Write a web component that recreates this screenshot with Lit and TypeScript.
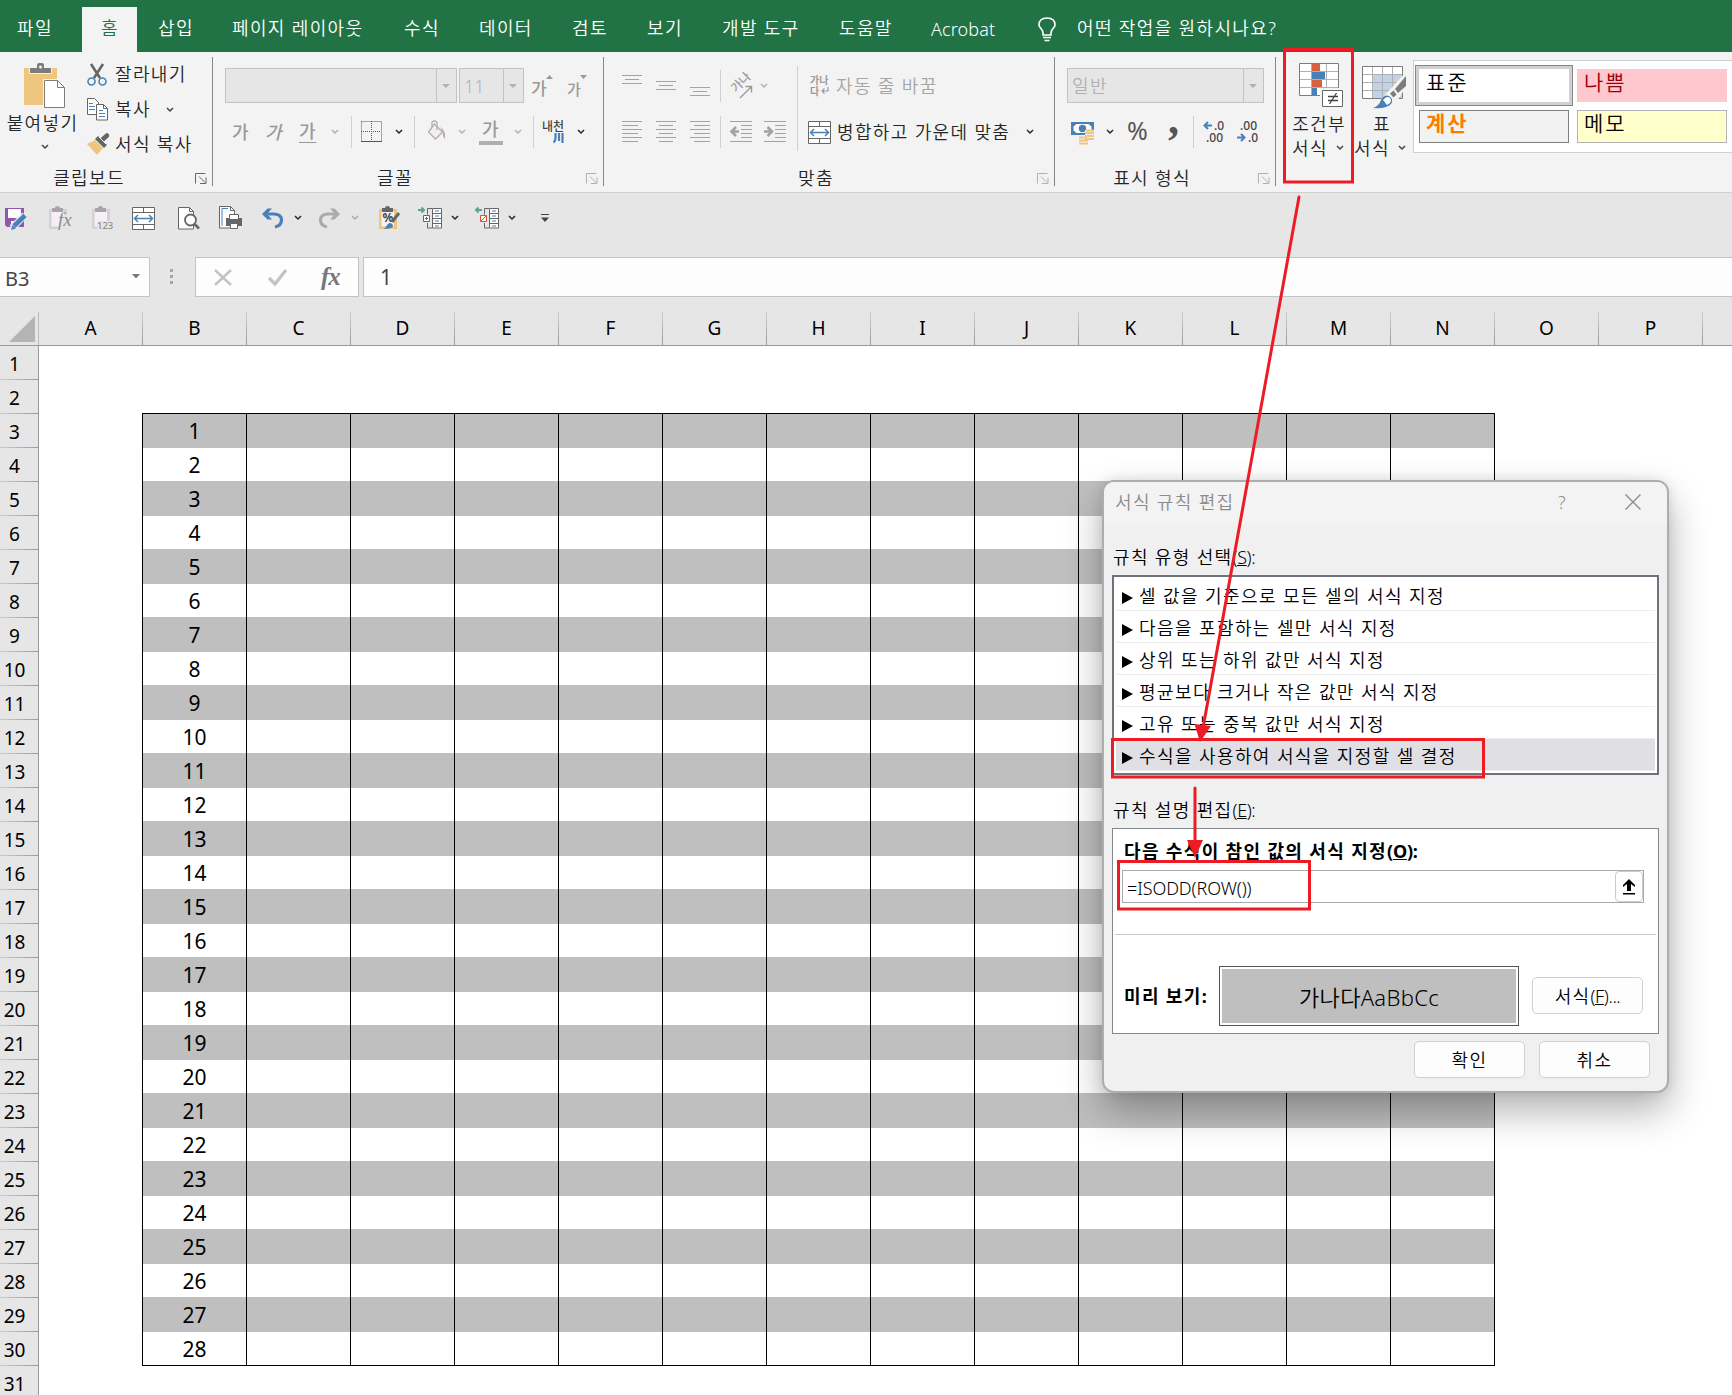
import { LitElement, html, svg, css } from 'lit';
import { customElement } from 'lit/decorators.js';
import { classMap } from 'lit/directives/class-map.js';

const base = css`
  * {
    box-sizing: border-box;
  }
  :host {
    display: block;
    box-sizing: border-box;
    font-family: 'Noto Sans', 'Noto Sans CJK KR', sans-serif;
    font-size: 18px;
    font-weight: 350;
    letter-spacing: 1.35px;
    line-height: 24px;
    white-space: nowrap;
    color: #262626;
  }
  svg {
    display: block;
    flex: none;
    overflow: visible;
  }
`;

const icon = (w: number, h: number, body: unknown) => html`
  <svg width=${w} height=${h} viewBox="0 0 ${w} ${h}" fill="none">${body}</svg>
`;

const chevron = (color = '#262626') =>
  icon(8, 6, svg`<path d="M1 1l3 3l3-3" stroke=${color} stroke-width="1.5" />`);

const mergeIcon = icon(23, 23, svg`
  <path d="M.5 .5h22v22h-22zM.5 5.5h22M.5 17.5h22M11.5 .5v5M11.5 17.5v5" fill="#fff" stroke="#666" />
  <path d="M2.5 11.5h18M6 8l-3.5 3.5L6 15M17 8l3.5 3.5L17 15" stroke="#4a80b8" stroke-width="1.5" />
`);

const scissors = icon(20, 22, svg`
  <path d="M4 0l9 14M16 0L7 14" stroke="#666" stroke-width="2.6" />
  <circle cx="4.5" cy="17.5" r="3.5" stroke="#4a80b8" stroke-width="1.6" />
  <circle cx="15.5" cy="17.5" r="3.5" stroke="#4a80b8" stroke-width="1.6" />
`);

const copyIcon = icon(21, 23, svg`
  <path d="M.5 .5h7l4 4v12H.5z" fill="#fff" stroke="#666" />
  <path d="M2 5.5h4M2 8.5h6M2 11.5h6" stroke="#4a80b8" />
  <path d="M9.500 6.500h7l4 4v11.500h-11z" fill="#fff" stroke="#666" />
  <path d="M16.500 6.500v4h4" stroke="#666" />
  <path d="M12 12.500h4M12 15.500h6M12 18.500h6" stroke="#4a80b8" />
`);

const painter = icon(23, 21, svg`
  <path d="M0 10l8-4 8 8-6 7z" fill="#edc57f" />
  <path d="M8 5l3-3 9 9-3 3z" fill="#666" />
  <path d="M14 7l6-5.500" stroke="#666" stroke-width="4.500" stroke-linecap="round" />
  <path d="M12 3l7 7" stroke="#f3f3f3" />
`);

const pasteIcon = icon(42, 45, svg`
  <path d="M0 5h33v37H0z" fill="#eec67d" />
  <path d="M6 5h7V2q0-2 2-2h3q2 0 2 2v3h7v5H6z" fill="#7c7c7c" />
  <path d="M5.500 5v5.500h22V5" stroke="#f3f3f3" />
  <circle cx="16.500" cy="4" r="1.500" fill="#f3f3f3" />
  <path d="M19 16h16l7 7v22H19z" fill="#f3f3f3" />
  <path d="M20.500 17.500h13l7 7v20h-20z" fill="#fff" stroke="#7c7c7c" />
  <path d="M33.500 17.500v7h7" stroke="#7c7c7c" />
`);

const launcher = (color: string) =>
  icon(12, 11, svg`<path d="M.5 10.500v-10h10M4 3.500l6 6M11 4.500v6h-6" stroke=${color} />`);

// Ruled lines, each given as [x, y, width].
const lines = (rows: number[][], color = '#a3a3a3') =>
  rows.map(([x, y, w]) => svg`<path d="M${x} ${y + 0.5}h${w}" stroke=${color} />`);

const alignTop = icon(20, 22, lines([[0, 0, 20], [3, 4, 14], [0, 8, 20]]));
const alignMiddle = icon(20, 22, lines([[0, 6, 20], [3, 10, 14], [0, 14, 20]]));
const alignBottom = icon(20, 22, lines([[0, 12, 20], [3, 16, 14], [0, 20, 20]]));
const alignLeft = icon(20, 22, lines([[0, 0, 20], [0, 4, 16], [0, 8, 20], [0, 12, 16], [0, 16, 20], [0, 20, 16]]));
const alignCenter = icon(20, 22, lines([[0, 0, 20], [3, 4, 14], [0, 8, 20], [3, 12, 14], [0, 16, 20], [3, 20, 14]]));
const alignRight = icon(20, 22, lines([[0, 0, 20], [4, 4, 16], [0, 8, 20], [4, 12, 16], [0, 16, 20], [4, 20, 16]]));

const indent = (out: boolean) => icon(22, 22, svg`
  ${lines([[0, 0, 22], [11, 4, 11], [11, 8, 11], [11, 12, 11], [11, 16, 11], [0, 20, 22]])}
  <path d=${out ? 'M9 10.500H2M6 6l-4.500 4.500L6 15' : 'M0 10.500h7M3.500 6l4.500 4.500L3.500 15'}
    stroke="#a3a3a3" stroke-width="2.600" />
`);

const borderIcon = icon(21, 22, svg`
  <path d="M.5 .5h20v20M.5 .5v20M10.500 0v20M0 10.500h20" stroke="#555" stroke-dasharray="1 1" />
  <path d="M0 20.500h21" stroke="#555" />
`);

const bucket = icon(20, 22, svg`
  <path d="M7.500 3l8 8-7 7-7-7z" fill="#f3edf3" stroke="#b0b0b0" stroke-width="1.300" />
  <path d="M5 6V2q0-2 2.500-2T10 2v7" stroke="#b0b0b0" stroke-width="1.300" />
  <path d="M13 6q6 3 5 12q-3-3-2-7z" fill="#b0b0b0" />
`);

const moneyIcon = icon(24, 23, svg`
  <path d="M0 1h23v13H0z" fill="#4a80b8" />
  <path d="M2.500 5.500l3-2.500h12l3 2.500v4l-3 2.500h-12l-3-2.500z" fill="#fff" />
  <circle cx="11.500" cy="7.500" r="3.700" fill="#4a80b8" />
  <path d="M14 9h9v10h-5v4H8v-7h6z" fill="#f3f3f3" />
  <path d="M15 9.500h8M14 12h9M14 15h9M14 18h9M8 16.500h8M8 19.500h9M8 22.500h9" stroke="#edc57f" stroke-width="2" />
`);

const bulb = icon(18, 26, svg`
  <path d="M5 18v-2q0-2-2-4.500Q1 9.500 1 8q0-7 8-7t8 7q0 1.500-2 3.500q-2 2.500-2 4.500v2z" stroke="#fff" stroke-width="1.600" />
  <path d="M5 20.500h8M6.500 23.500h5" stroke="#fff" stroke-width="1.500" />
`);

const conditionalIcon = icon(44, 45, svg`
  <path d="M.5 .5h39v32H.5z" fill="#fff" />
  <path d="M.5 8.500h39M.5 16.500h39M.5 24.500h39M12.500 .5v32M27.500 .5v32" stroke="#b0b0b0" />
  <path d="M.5 .5h39v32H.5z" stroke="#7c7c7c" />
  <path d="M13 1h8v7h-8zM13 17h10v7H13z" fill="#d9603c" />
  <path d="M13 9h13v7H13zM13 25h5v7h-5z" fill="#4a80b8" />
  <path d="M21 25h23v20H21z" fill="#f3f3f3" />
  <path d="M23.500 27.500h20v16h-20z" fill="#fff" stroke="#666" />
  <path d="M29 33.500h10M29 37.500h10M37.500 30l-7 11" stroke="#444" stroke-width="1.300" />
`);

const tableIcon = icon(44, 43, svg`
  <path d="M.5 .5h40v32H.5z" fill="#fff" />
  <path d="M10 9h30v23H10z" fill="#c1d3e9" />
  <path d="M.5 8.500h40M.5 16.500h40M.5 24.500h40M10.500 .5v32M20.500 .5v32M30.500 .5v32" stroke="#b0b0b0" />
  <path d="M.5 .5h40v32H.5z" stroke="#7c7c7c" />
  <path d="M44 6L22 30 10 43h20l14-22z" fill="#f3f3f3" />
  <path d="M44 10v10L36 27l-3-4z" fill="#7c7c7c" />
  <path d="M31.500 24.500l3 4-3 3-3.500-4z" fill="#7c7c7c" />
  <path d="M11 42q6-2 8-8q3-6 8-4q5 3 2 8q-4 5-18 4z" fill="#4a80b8" />
  <path d="M21 34q4-5 7-2q3 4-3 7" fill="#fff" />
`);

const saveIcon = icon(23, 23, svg`
  <path d="M0 1h19v19H2l-2-2z" fill="#8f57ae" />
  <path d="M3 2h13v9H3z" fill="#fff" />
  <path d="M6 14h8v5H6z" fill="#fff" /><path d="M7 16h3v3H7z" fill="#8f57ae" />
  <path d="M7 21L20 8" stroke="#e6e6e6" stroke-width="7" />
  <path d="M9 19L20 8.500" stroke="#4a80b8" stroke-width="4.500" /><path d="M6 23l1.500-5 3.500 3.500z" fill="#4a80b8" />
`);

const clipboard = (label: string, color: string, extra: unknown = '') => icon(22, 24, svg`
  <path d="M0 3h18v20H0z" fill=${color} />
  <path d="M2.500 5h12.500v15.500H2.500z" fill="#f6f0f6" />
  <path d="M3 2h3q0-2 2.500-2T11 2h3v4H3z" fill=${color === '#edc57f' ? '#666' : '#a8a4a8'} />
  ${extra}
  ${label === '123' ? svg`<path d="M5 15h17v9H5z" fill="#e6e6e6" /><text x="5" y="23" class="tiny">123</text>` : ''}
  ${label === 'fx' ? svg`<path d="M11 9h11v15H9z" fill="#e6e6e6" /><text x="9" y="20" class="fx">fx</text>` : ''}
`);

const pastePercent = clipboard('', '#edc57f', svg`
  <text x="3.500" y="16" class="pct">%</text>
  <path d="M20 7l-7 9" stroke="#666" stroke-width="3" />
  <path d="M4 23q3-1 4-4q3-4 6 0q1 4-10 4z" fill="#4a80b8" />
`);

const previewIcon = icon(22, 23, svg`
  <path d="M.5 .5h11l4 4v17.500H.5z" fill="#fff" stroke="#666" /><path d="M11.500 .5v4h4" stroke="#666" />
  <circle cx="12.500" cy="13" r="5.500" fill="#fff" stroke="#666" stroke-width="1.800" />
  <path d="M16.500 17l4.500 4.500" stroke="#666" stroke-width="2.600" />
`);

const printIcon = icon(24, 24, svg`
  <path d="M.5 .5h11l4 4v17.500H.5z" fill="#fff" stroke="#666" /><path d="M11.500 .5v4h4" stroke="#666" />
  <path d="M9 2.500H3v17.500" stroke="#4a80b8" />
  <path d="M7 12h16v8H7z" fill="#666" />
  <path d="M10.500 8.500h9v5h-9zM11.500 17.500h7v5h-7z" fill="#fff" stroke="#666" />
`);

const undo = (color: string, flip = false) => icon(22, 21, svg`
  <g transform=${flip ? 'translate(21 0) scale(-1 1)' : ''}>
    <path d="M3 6h9.500q7 .5 7 6t-6.500 7" stroke=${color} stroke-width="3.200" />
    <path d="M5.500 .5h4.500L5 6l5 5.500H5.500L0 6z" fill=${color} />
  </g>
`);

const outline = (add: boolean) => icon(24, 22, svg`
  <path d=${add ? 'M0 3h6M3.500 .5L6 3 3.500 5.500' : 'M7 3H1M3.500 .5L1 3 3.500 5.500'} stroke="#5ea58b" stroke-width="2" />
  <path d="M14 1.500H9.500v6M9.500 16v5H14" stroke="#666" />
  <path d="M14.500 1.500h9v19.500h-9zM14.500 6.500h9M14.500 11.500h9M14.500 16.500h9" fill="#fff" stroke="#666" />
  <path d="M17 4h4M17 9h4M17 14h4M17 19h4" stroke="#4a80b8" />
  <path d="M5.500 8.500h6v6h-6z" fill="#fff" stroke=${add ? '#666' : '#d9502c'} />
  <path d=${add ? 'M7 11.500h3M8.500 10v3' : 'M6 14l5-5'} stroke=${add ? '#666' : '#d9502c'} />
`);

@customElement('ribbon-tabs')
class RibbonTabs extends LitElement {
  static styles = [
    base,
    css`
      .tabs {
        display: grid;
        grid-template-columns: 82px 55px 74px 172px 75px 93px 75px 75px 117px 92px 128px 39px 1fr;
        height: 52px;
        padding-top: 7px;
        background: #217346;
        color: #fff;
      }
      .tab {
        height: 45px;
        padding: 9px 0 0 21px;
      }
      .file {
        padding-left: 17px;
      }
      .active {
        padding-left: 19px;
        background: #f3f3f3;
        color: #217346;
      }
      .acrobat {
        padding-top: 10px;
        letter-spacing: 0.1px;
      }
      .bulb {
        padding-top: 10px;
      }
      .tell {
        padding-left: 0;
      }
    `,
  ];

  render() {
    const names = ['삽입', '페이지 레이아웃', '수식', '데이터', '검토', '보기', '개발 도구', '도움말'];
    return html`
      <div class="tabs">
        <div class="tab file">파일</div>
        <div class="tab active">홈</div>
        ${names.map((name) => html`<div class="tab">${name}</div>`)}
        <div class="tab acrobat">Acrobat</div>
        <div class="bulb">${bulb}</div>
        <div class="tab tell">어떤 작업을 원하시나요?</div>
      </div>
    `;
  }
}

@customElement('ribbon-panel')
class RibbonPanel extends LitElement {
  static styles = [
    base,
    css`
      .ribbon {
        display: flex;
        height: 141px;
        background: #f3f3f3;
        border-bottom: 1px solid #d0d0d0;
        overflow: hidden;
      }
      .ribbon > * {
        flex: none;
      }
      .group {
        display: flex;
        flex-direction: column;
        height: 129px;
        margin-top: 5px;
        border-right: 1px solid #868686;
      }
      .body {
        flex: 1;
      }
      .caption {
        display: grid;
        grid-template-columns: 1fr 17px;
        align-items: center;
        height: 24px;
        text-align: center;
        margin-bottom: -4px;
      }
      .caption span {
        padding-right: 9px;
      }
      .clip .caption span {
        padding-right: 17px;
      }
      .row {
        display: grid;
        align-items: center;
        height: 35px;
      }
      .clip {
        width: 213px;
      }
      .clip .body {
        display: grid;
        grid-template-columns: 87px 1fr;
      }
      .paste {
        display: flex;
        flex-direction: column;
        align-items: center;
        padding: 6px 0 0 3px;
      }
      .paste span {
        margin: 3px 5px 9px 0;
      }
      .clip .row {
        grid-template-columns: 28px 51px 1fr;
      }
      .clip .row:last-child {
        grid-template-columns: 28px 1fr;
      }
      .clip .row span {
        padding-bottom: 2px;
      }
      .font {
        width: 391px;
      }
      .row1 {
        margin-top: 11px;
      }
      .row2 {
        height: 32px;
        margin-top: 13px;
      }
      .font .row1 {
        padding-left: 12px;
        grid-template-columns: 234px 73px 36px 1fr;
      }
      .font .row2 {
        padding-left: 19px;
        grid-template-columns: 33px 34px 32px 20px 10px 34px 19px 13px 31px 21px 35px 19px 10px 34px 1fr;
      }
      .align {
        width: 451px;
      }
      .align .body {
        display: grid;
        grid-template-columns: 193px 1fr;
      }
      .align .left .row {
        padding-left: 18px;
        grid-template-columns: 34px 34px 30px 10px 34px 1fr;
      }
      .align .left .row1 {
        grid-template-columns: 34px 34px 30px 10px 30px 1fr;
      }
      .align .right {
        height: 85px;
        margin-top: 9px;
        border-left: 1px solid #d0d0d0;
      }
      .align .right .row1 {
        margin-top: 2px;
        padding-left: 13px;
        grid-template-columns: 25px 1fr;
      }
      .align .right .row2 {
        padding-left: 10px;
        grid-template-columns: 29px 189px 1fr;
      }
      .number {
        width: 221px;
      }
      .number .row1 {
        padding-left: 12px;
      }
      .number .row2 {
        padding-left: 16px;
        grid-template-columns: 35px 21px 41px 25px 10px 34px 1fr;
      }
      .combo {
        display: flex;
        justify-content: space-between;
        align-items: center;
        height: 35px;
        background: #e6e6e6;
        border: 1px solid #c3c3c3;
        color: #b1b1b1;
        padding-left: 4px;
      }
      .combo i {
        display: grid;
        place-items: center;
        width: 20px;
        height: 33px;
        padding-right: 2px;
        border-left: 1px solid #c3c3c3;
      }
      .wide {
        width: 232px;
      }
      .size {
        width: 65px;
      }
      .size,
      .pct,
      .comma {
        letter-spacing: 0;
      }
      .general {
        width: 197px;
      }
      .off {
        color: #a6a6a6;
      }
      .strong {
        font-weight: 500;
        color: #999;
      }
      .italic {
        font-style: italic;
      }
      .under {
        width: 17px;
        height: 22px;
        line-height: 20px;
        border-bottom: 1px solid #999;
      }
      .inked {
        width: 24px;
        height: 26px;
        line-height: 20px;
        text-align: center;
        border-bottom: 4px solid #b1adb1;
      }
      .sep {
        width: 1px;
        height: 32px;
        background: #d0d0d0;
      }
      .pct {
        font-size: 25px;
        height: 28px;
        font-weight: 400;
        color: #555;
      }
      .comma {
        font: bold 44px/8px 'Liberation Serif', serif;
        height: 32px;
        color: #555;
      }
      .big {
        display: flex;
        flex-direction: column;
        padding-top: 11px;
      }
      .big .name {
        text-align: center;
      }
      .big .more {
        display: flex;
        align-items: center;
        gap: 8px;
      }
      .cond {
        width: 79px;
        padding-left: 16px;
      }
      .cond .name {
        width: 54px;
        margin-top: 4px;
      }
      .cond > svg,
      .tbl > svg {
        margin-left: 7px;
      }
      .tbl {
        width: 58px;
        padding-top: 14px;
      }
      .tbl .name {
        width: 54px;
        margin-top: 3px;
      }
      .tbl .more {
        margin-left: -1px;
      }
      .gallery {
        display: grid;
        grid-template: 41px 33px / 158px 150px;
        gap: 4px;
        width: 330px;
        height: 93px;
        margin-top: 8px;
        padding: 4px 1px;
        background: #fff;
        border: 1px solid #d0d0d0;
        font-size: 21px;
        letter-spacing: 2px;
        color: #000;
      }
      .style {
        height: 33px;
        padding: 0 6px;
        border: 1px solid transparent;
        line-height: 24px;
      }
      .picked {
        height: 41px;
        padding: 4px 10px;
        border: 1px solid #868686;
        box-shadow: inset 0 0 0 3px #d0d0d0;
      }
      .bad {
        margin-top: 4px;
        background: #ffc7ce;
        color: #9c0006;
      }
      .calc {
        margin-left: 4px;
        width: 150px;
        background: #f2f2f2;
        border-color: #7f7f7f;
        color: #fa7d00;
        font-weight: bold;
      }
      .note {
        background: #ffffcc;
        border-color: #b2b2b2;
      }
      .mini {
        font-size: 12px;
        font-weight: 500;
        letter-spacing: 0;
      }
    `,
  ];

  _combo(cls: string, text: string) {
    return html`
      <div class="combo ${cls}">
        <span>${text}</span>
        <i>${icon(8, 4, svg`<path d="M0 0h8L4 4z" fill="#b1b1b1" />`)}</i>
      </div>
    `;
  }

  _caption(text: string, color = '#b1b1b1') {
    return html`<div class="caption"><span>${text}</span>${launcher(color)}</div>`;
  }

  render() {
    const sep = html`<div class="sep"></div>`;
    const grey = '#b1b1b1';
    return html`
      <div class="ribbon">
        <div class="group clip">
          <div class="body">
            <div class="paste">${pasteIcon}<span>붙여넣기</span>${chevron('#444')}</div>
            <div>
              <div class="row">${scissors}<span>잘라내기</span></div>
              <div class="row">${copyIcon}<span>복사</span>${chevron('#444')}</div>
              <div class="row">${painter}<span>서식 복사</span></div>
            </div>
          </div>
          ${this._caption('클립보드', '#666')}
        </div>

        <div class="group font">
          <div class="body">
            <div class="row row1">
              ${this._combo('wide', '')}${this._combo('size', '11')}
              ${icon(21, 22, svg`
                <text x="-1" y="20" font-size="17" font-weight="500" fill="#999">가</text>
                <path d="M14 4l3.500-4L21 4z" fill="#999" />`)}
              ${icon(21, 22, svg`
                <text x="-1" y="20" font-size="15" font-weight="500" fill="#999">가</text>
                <path d="M12 0h7l-3.500 4z" fill="#999" />`)}
            </div>
            <div class="row row2">
              <span class="strong">가</span>
              <span class="strong italic">가</span>
              <span class="strong under">가</span>
              ${chevron(grey)}${sep}${borderIcon}${chevron()}${sep}${bucket}${chevron(grey)}
              <span class="strong inked">가</span>
              ${chevron(grey)}${sep}
              ${icon(22, 22, svg`
                <text x="-1" y="10" class="mini" fill="#444">내천</text>
                <path d="M12.500 12v5q0 3-2 4.500M16 12v8M19.500 12v10" stroke="#4a80b8" stroke-width="2.200" />`)}
              ${chevron()}
            </div>
          </div>
          ${this._caption('글꼴')}
        </div>

        <div class="group align">
          <div class="body">
            <div class="left">
              <div class="row row1">
                ${alignTop}${alignMiddle}${alignBottom}${sep}
                ${icon(22, 24, svg`
                  <text transform="translate(6 19) rotate(-45)" font-size="12" font-weight="500" letter-spacing="0" fill="#999">가나</text>
                  <path d="M10 24L21 13M15.500 12.500h6v6" stroke="#999" stroke-width="1.400" />`)}
                ${chevron(grey)}
              </div>
              <div class="row row2">
                ${alignLeft}${alignCenter}${alignRight}${sep}${indent(true)}${indent(false)}
              </div>
            </div>
            <div class="right">
              <div class="row row1 off">
                ${icon(20, 20, svg`
                  <text x="-1" y="8" font-size="10" font-weight="700" letter-spacing="0" fill="#999">가나</text>
                  <text x="-1" y="19" font-size="10" font-weight="700" letter-spacing="0" fill="#999">다</text>
                  <path d="M17 11v4h-6M13.500 12.500L11 15l2.500 2.500" stroke="#999" stroke-width="1.200" />`)}
                <span>자동 줄 바꿈</span>
              </div>
              <div class="row row2">${mergeIcon}<span>병합하고 가운데 맞춤</span>${chevron()}</div>
            </div>
          </div>
          ${this._caption('맞춤')}
        </div>

        <div class="group number">
          <div class="body">
            <div class="row row1">${this._combo('general', '일반')}</div>
            <div class="row row2">
              ${moneyIcon}${chevron()}<span class="pct">%</span><span class="comma">,</span>${sep}
              ${icon(23, 24, svg`
                <text x="11" y="10" class="mini" fill="#444">.0</text><text x="3" y="22" class="mini" fill="#444">.00</text>
                <path d="M9 5.500H1.500M5 2L1.500 5.500 5 9" stroke="#4a80b8" stroke-width="2" />`)}
              ${icon(23, 24, svg`
                <text x="3" y="10" class="mini" fill="#444">.00</text><text x="11" y="22" class="mini" fill="#444">.0</text>
                <path d="M0 17.500h7.500M4 14L7.500 17.500 4 21" stroke="#4a80b8" stroke-width="2" />`)}
            </div>
          </div>
          ${this._caption('표시 형식')}
        </div>

        <div class="big cond">
          ${conditionalIcon}
          <div class="name">조건부</div>
          <div class="more">서식 ${chevron('#444')}</div>
        </div>
        <div class="big tbl">
          ${tableIcon}
          <div class="name">표</div>
          <div class="more">서식 ${chevron('#444')}</div>
        </div>
        <div class="gallery">
          <div class="style picked">표준</div>
          <div class="style bad">나쁨</div>
          <div class="style calc">계산</div>
          <div class="style note">메모</div>
        </div>
      </div>
    `;
  }
}

@customElement('quick-access')
class QuickAccess extends LitElement {
  static styles = [
    base,
    css`
      .bar {
        display: grid;
        grid-template-columns:
          44px 43px 40px 46px 41px 43px 32px 25px 32px 28px 39px 33px 24px 33px 33px 1fr;
        align-items: center;
        height: 64px;
        padding: 0 0 14px 5px;
        background: #e6e6e6;
      }
      .tiny {
        font: 500 9.5px 'Noto Sans', sans-serif;
        letter-spacing: 0;
        fill: #8c8c8c;
      }
      .fx {
        font: italic 19px 'Liberation Serif', serif;
        letter-spacing: 0;
        fill: #8c8c8c;
      }
      .pct {
        font: bold 12px 'Noto Sans', sans-serif;
        letter-spacing: 0;
        fill: #444;
      }
    `,
  ];

  render() {
    return html`
      <div class="bar">
        ${saveIcon}${clipboard('fx', '#d6cfd6')}${clipboard('123', '#d6cfd6')}${mergeIcon}${previewIcon}${printIcon}
        ${undo('#4a80b8')}${chevron()}${undo('#ababab', true)}${chevron('#ababab')}
        ${pastePercent}${outline(true)}${chevron()}${outline(false)}${chevron()}
        ${icon(8, 8, svg`<path d="M0 .5h8" stroke="#444" /><path d="M0 3.500h8L4 8z" fill="#444" />`)}
      </div>
    `;
  }
}

@customElement('formula-bar')
class FormulaBar extends LitElement {
  static styles = [
    base,
    css`
      .bar {
        display: flex;
        height: 55px;
        background: #e6e6e6;
        font-size: 20px;
        font-weight: 400;
        letter-spacing: 0;
        color: #444;
      }
      .box {
        display: flex;
        align-items: center;
        height: 40px;
        background: #fdfdfd;
        border: 1px solid #c3c3c3;
      }
      .name {
        justify-content: space-between;
        width: 150px;
        padding: 3px 9px 0 5px;
        border-left: 0;
      }
      .name svg {
        margin-top: -5px;
      }
      .grip {
        width: 45px;
        padding: 12px 0 0 20px;
      }
      .tools {
        display: grid;
        grid-template-columns: 54px 53px 1fr;
        width: 164px;
        padding-left: 18px;
      }
      .fx {
        font: italic bold 25px/30px 'Liberation Serif', serif;
        letter-spacing: -1px;
        color: #777;
      }
      .value {
        flex: 1;
        margin-left: 4px;
        padding-left: 16px;
        border-right: 0;
        font-size: 21px;
      }
    `,
  ];

  render() {
    return html`
      <div class="bar">
        <div class="box name">B3 ${icon(8, 5, svg`<path d="M0 0h8L4 4.500z" fill="#777" />`)}</div>
        <div class="grip">
          ${icon(3, 16, svg`<path d="M0 0h3v3H0zM0 6h3v3H0zM0 12h3v3H0z" fill="#a6a6a6" />`)}
        </div>
        <div class="box tools">
          ${icon(18, 17, svg`<path d="M1 1l16 15M17 1L1 16" stroke="#c3c3c3" stroke-width="2.400" />`)}
          ${icon(19, 17, svg`<path d="M1 9l6 6L18 1" stroke="#c3c3c3" stroke-width="3.200" />`)}
          <span class="fx">fx</span>
        </div>
        <div class="box value">1</div>
      </div>
    `;
  }
}

const COLUMNS = 'ABCDEFGHIJKLMNOP'.split('');
const FIRST_ROW = 3;
const LAST_ROW = 30;

@customElement('sheet-grid')
class SheetGrid extends LitElement {
  static styles = [
    base,
    css`
      :host {
        letter-spacing: 0;
        font-weight: 400;
        color: #000;
        background: #fff;
      }
      .head,
      .row {
        display: flex;
        height: 34px;
      }
      .head {
        background: #e6e6e6;
        border-bottom: 1px solid #999;
      }
      .corner {
        flex: none;
        width: 39px;
        padding: 4px 0 0 9px;
        border-right: 1px solid #bbb;
      }
      .letter {
        flex: none;
        width: 104px;
        text-align: center;
        font-size: 19px;
        line-height: 33px;
        border-right: 1px solid;
        border-image: linear-gradient(#d0d0d0, #999) 1;
      }
      .number {
        flex: none;
        width: 39px;
        padding-right: 9px;
        font-size: 19px;
        line-height: 36px;
        text-align: center;
        background: linear-gradient(90deg, #ccc, #999) 0 100% / 100% 1px no-repeat #e6e6e6;
        border-right: 1px solid #999;
      }
      .blank {
        width: 103px;
      }
      .cells {
        display: flex;
        border-right: 1px solid #000;
      }
      .cell {
        width: 104px;
        border-left: 1px solid #000;
        font-size: 21px;
        line-height: 34px;
        text-align: center;
      }
      .odd .cell {
        margin-top: -1px;
        padding-top: 1px;
        background: #bfbfbf;
      }
      .first {
        box-shadow: 0 -1px #000;
      }
      .first .cell {
        margin-top: 0;
        padding-top: 0;
      }
      .last {
        border-bottom: 1px solid #000;
      }
    `,
  ];

  _cells(row: number) {
    const cls = { cells: true, odd: row % 2 === 1, first: row === FIRST_ROW, last: row === LAST_ROW };
    return html`
      <div class="blank"></div>
      <div class=${classMap(cls)}>
        ${Array.from({ length: 13 }, (_, i) => html`<div class="cell">${i === 0 ? row - 2 : ''}</div>`)}
      </div>
    `;
  }

  render() {
    return html`
      <div class="head">
        <div class="corner">${icon(26, 26, svg`<path d="M26 0v26H0z" fill="#b4b4b4" />`)}</div>
        ${COLUMNS.map((c) => html`<div class="letter">${c}</div>`)}
      </div>
      ${Array.from({ length: 31 }, (_, i) => i + 1).map((row) => html`
        <div class="row">
          <div class="number">${row}</div>
          ${row >= FIRST_ROW && row <= LAST_ROW ? this._cells(row) : ''}
        </div>
      `)}
    `;
  }
}

@customElement('rule-dialog')
class RuleDialog extends LitElement {
  static styles = [
    base,
    css`
      :host {
        width: 567px;
        height: 613px;
        background: #f0f0f0;
        border: 2px solid #adadad;
        border-radius: 12px;
        box-shadow: 0 18px 38px rgba(0, 0, 0, 0.3), 0 0 12px rgba(0, 0, 0, 0.1);
        color: #000;
        overflow: hidden;
      }
      .title {
        display: grid;
        grid-template-columns: 443px 67px 1fr;
        align-items: center;
        height: 43px;
        padding: 0 0 3px 11px;
        background: #f3f3f3;
        color: #8c8c8c;
      }
      .label {
        margin-left: 9px;
      }
      .l1 {
        margin-top: 20px;
      }
      .l2 {
        margin-top: 23px;
      }
      .lat {
        letter-spacing: -0.4px;
      }
      .types {
        width: 547px;
        height: 200px;
        margin: 6px 0 0 8px;
        padding: 2px;
        background: #fff;
        border: 2px solid #6f727b;
      }
      .type {
        display: grid;
        grid-template-columns: 17px 1fr;
        align-items: center;
        height: 32px;
        padding: 3px 0 0 6px;
        border-bottom: 1px solid #ededed;
        letter-spacing: 1.4px;
      }
      .type svg {
        margin-top: 3px;
      }
      .chosen {
        background: #e0dfe4;
      }
      .rule {
        width: 547px;
        height: 206px;
        margin: 6px 0 0 8px;
        background: #fff;
        border: 1px solid #828790;
      }
      .bold {
        font-weight: bold;
      }
      .heading {
        margin: 10px 0 0 11px;
      }
      .heading .lat {
        letter-spacing: -0.2px;
      }
      .input {
        display: flex;
        justify-content: space-between;
        width: 522px;
        height: 33px;
        margin: 7px 0 0 9px;
        border: 1px solid #aaa;
        padding-left: 4px;
        line-height: 34px;
        letter-spacing: -0.1px;
      }
      .pick {
        display: grid;
        place-items: center;
        width: 28px;
        height: 31px;
        border: 1px solid #ccc;
        border-radius: 4px;
      }
      .line {
        height: 1px;
        margin: 31px 2px 0;
        background: #c6c6c6;
      }
      .preview {
        display: grid;
        grid-template-columns: 95px 300px 112px;
        align-items: center;
        margin: 31px 0 0 11px;
      }
      .sample {
        height: 60px;
        padding: 2px;
        border: 1px solid #555;
      }
      .sample div {
        height: 54px;
        background: #bfbfbf;
        font-size: 22px;
        line-height: 57px;
        text-align: center;
        letter-spacing: 0.3px;
      }
      .button {
        width: 111px;
        height: 37px;
        background: #fdfdfd;
        border: 1px solid #d0d0d0;
        border-radius: 5px;
        line-height: 37px;
        text-align: center;
      }
      .preview .button {
        margin: -1px 0 0 13px;
      }
      .actions {
        display: flex;
        justify-content: flex-end;
        gap: 14px;
        margin: 7px 17px 0 0;
      }
    `,
  ];

  render() {
    const types = [
      '셀 값을 기준으로 모든 셀의 서식 지정',
      '다음을 포함하는 셀만 서식 지정',
      '상위 또는 하위 값만 서식 지정',
      '평균보다 크거나 작은 값만 서식 지정',
      '고유 또는 중복 값만 서식 지정',
      '수식을 사용하여 서식을 지정할 셀 결정',
    ];
    return html`
      <div class="title">
        <span>서식 규칙 편집</span><span>?</span>
        ${icon(16, 16, svg`<path d="M.5 .5l15 15M15.500 .5l-15 15" stroke="#8c8c8c" stroke-width="1.400" />`)}
      </div>
      <div class="label l1">규칙 유형 선택<span class="lat">(<u>S</u>):</span></div>
      <div class="types">
        ${types.map((name, i) => html`
          <div class=${classMap({ type: true, chosen: i === 5 })}>
            ${icon(11, 12, svg`<path d="M0 0l11 6L0 12z" fill="#000" />`)}<span>${name}</span>
          </div>
        `)}
      </div>
      <div class="label l2">규칙 설명 편집<span class="lat">(<u>E</u>):</span></div>
      <div class="rule">
        <div class="bold heading">다음 수식이 참인 값의 서식 지정<span class="lat">(<u>O</u>):</span></div>
        <div class="input">
          <span>=ISODD(ROW())</span>
          <div class="pick">
            ${icon(12, 16, svg`<path d="M6 0l6 6v2L8 5v7H4V5L0 8V6zM0 14h12v1.500H0z" fill="#000" />`)}
          </div>
        </div>
        <div class="line"></div>
        <div class="preview">
          <span class="bold">미리 보기:</span>
          <div class="sample"><div>가나다AaBbCc</div></div>
          <div class="button">서식<span class="lat">(<u>F</u>)...</span></div>
        </div>
      </div>
      <div class="actions">
        <div class="button">확인</div>
        <div class="button">취소</div>
      </div>
    `;
  }
}

@customElement('app-root')
class AppRoot extends LitElement {
  static styles = css`
    :host {
      display: block;
      position: relative;
      width: 1732px;
      height: 1395px;
      overflow: hidden;
      background: #fff;
    }
    rule-dialog {
      position: absolute;
      left: 1102px;
      top: 480px;
    }
    .marks {
      position: absolute;
      inset: 0;
    }
  `;

  render() {
    return html`
      <ribbon-tabs></ribbon-tabs>
      <ribbon-panel></ribbon-panel>
      <quick-access></quick-access>
      <formula-bar></formula-bar>
      <sheet-grid></sheet-grid>
      <rule-dialog></rule-dialog>
      <svg class="marks" width="1732" height="1395" fill="none" stroke="#ed1c24" stroke-width="3">
        <rect x="1284.500" y="49.500" width="68" height="132.500" />
        <rect x="1112.500" y="739.500" width="371" height="37.500" />
        <rect x="1118.500" y="861.500" width="191" height="47.500" />
        <path d="M1299 197L1203 728M1195 788v56" stroke-linecap="round" />
        <path d="M1194.500 724l16.500 2-11 16zM1187 840h16l-8 18z" fill="#ed1c24" stroke="none" />
      </svg>
    `;
  }
}
